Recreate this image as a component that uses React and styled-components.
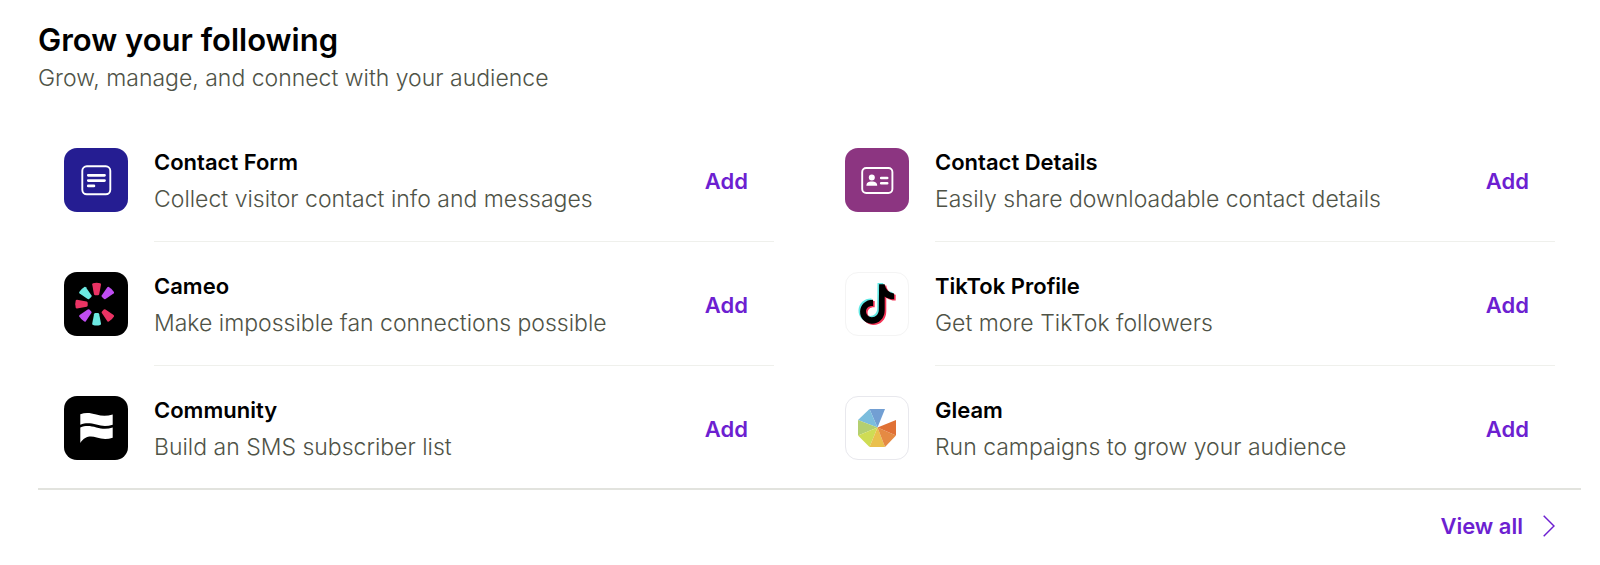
import React from "react";
import styled, { createGlobalStyle } from "styled-components";

const GlobalStyle = createGlobalStyle`
  *, *::before, *::after { box-sizing: border-box; }
  body {
    margin: 0;
    background: #fff;
    color: #000;
    font-family: Inter, "Liberation Sans", sans-serif;
  }
`;

const Section = styled.section`
  padding: 20px 19px 12px 38px;
`;

const Heading = styled.h2`
  margin: 0;
  font-size: 31px;
  line-height: 40px;
  font-weight: 600;
`;

const Subtitle = styled.p`
  margin: 0;
  font-size: 23px;
  line-height: 36px;
  font-weight: 300;
  color: #4f5347;
`;

const AppGrid = styled.ul`
  display: grid;
  grid-template-columns: 1fr 1fr;
  column-gap: 71px;
  margin: 0;
  padding: 22px 26px 0;
  list-style: none;
  border-bottom: 2px solid #e2e3de;
`;

const AppItem = styled.li`
  display: flex;
  gap: 26px;
`;

const Tile = styled.div`
  flex: none;
  width: 64px;
  height: 64px;
  margin-top: 30px;
  border-radius: 13px;
  overflow: hidden;
  background: ${(p) => p.$bg};
  border: ${(p) => (p.$outlined ? "1px solid " + p.$outlined : "0")};

  svg {
    display: block;
    width: 64px;
    height: 64px;
    margin: ${(p) => (p.$outlined ? "-1px" : "0")};
  }
`;

const Row = styled.div`
  flex: 1;
  min-width: 0;
  display: flex;
  align-items: center;
  justify-content: space-between;
  padding: 26px 26px ${(p) => (p.$last ? "21px" : "22px")} 0;
  border-bottom: ${(p) => (p.$last ? "0" : "1px solid #eff0ec")};
`;

const AppName = styled.h3`
  margin: 0;
  font-size: 22px;
  line-height: 36px;
  font-weight: 600;
`;

const AppText = styled.p`
  margin: 0;
  font-size: 23px;
  line-height: 39px;
  font-weight: 300;
  color: #4f5347;
`;

const AddButton = styled.button`
  padding: 0 0 2px;
  border: 0;
  background: none;
  color: #6d1fd1;
  font: 600 22px/36px Inter, "Liberation Sans", sans-serif;
  cursor: pointer;
`;

const Footer = styled.footer`
  display: flex;
  justify-content: flex-end;
  padding: 18px 26px 0;
`;

const ViewAll = styled.a`
  display: flex;
  align-items: center;
  gap: 20px;
  color: #6d1fd1;
  font-size: 22px;
  line-height: 36px;
  font-weight: 600;
  text-decoration: none;

  svg { display: block; }
`;

const FormIcon = () => (
  <svg viewBox="0 0 64 64" fill="none" stroke="#fff" strokeLinecap="round" aria-hidden="true">
    <rect x="18.3" y="18.3" width="28" height="28" rx="4.5" strokeWidth="1.9" />
    <path d="M24.3 27.3h16.2M24.3 32.6h16.2M24.3 37.9h5.6" strokeWidth="2.8" />
  </svg>
);

const DetailsIcon = () => (
  <svg viewBox="0 0 64 64" fill="none" stroke="#fff" strokeLinecap="round" aria-hidden="true">
    <rect x="17.2" y="20" width="30.2" height="25" rx="4" strokeWidth="1.9" />
    <circle cx="26.8" cy="29.6" r="3" fill="#fff" stroke="none" />
    <path d="M21.4 37.7c0-3.2 2-4.3 5.4-4.3s5.4 1.1 5.4 4.3z" fill="#fff" stroke="none" />
    <path d="M36.2 30h6M36.2 35.3h6" strokeWidth="2.6" />
  </svg>
);

const CAMEO_BLADES = [
  [0, "#ea3364"],
  [45, "#bf4df2"],
  [135, "#ea3364"],
  [180, "#6ce9e2"],
  [225, "#bf4df2"],
  [270, "#ea3364"],
  [315, "#6ce9e2"],
];

const CameoIcon = () => (
  <svg viewBox="0 0 64 64" aria-hidden="true">
    {CAMEO_BLADES.map(([angle, color]) => (
      <path
        key={angle}
        d="M-3.6-20.9Q0-21.9 3.6-20.9Q4.5-20.6 4.4-19.6L2.6-10Q2.3-8.9 1.3-8.9H-1.3Q-2.3-8.9-2.6-10L-4.4-19.6Q-4.5-20.6-3.6-20.9z"
        fill={color}
        transform={`translate(32.6 32.2) rotate(${angle})`}
      />
    ))}
  </svg>
);

const CommunityIcon = () => (
  <svg viewBox="0 0 64 64" fill="#fff" aria-hidden="true">
    <path d="M16.3 18.3c5.2-2 10.2-1.4 16 .3 5.8 1.7 10.7 1.7 16.4-.1v10.2c-5.7 1.7-10.6 1.5-16.4-.1-5.8-1.7-10.8-2-16 .1z" />
    <path d="M16.3 31.4c5.2-2.1 10.2-1.7 16 0 5.8 1.7 10.7 1.9 16.4.2v10.1c-5.5 1.7-10.5 1.5-16-.2-5.9-1.8-11.8-1.8-16.4 5.5z" />
  </svg>
);

const NOTE =
  "M34.1 12h5.6c.5 4.6 4.2 8.7 9.4 9.1v5.9c-3.5.2-6.8-1-9.4-2.9v13.8c0 8.5-6.4 13.9-13.4 13.5C19.6 51 14.8 45.6 15.1 39c.3-6.9 6-11.9 13-11.6v6.3c-3.9-.5-7 1.8-7.1 5.3-.1 3.3 2.5 5.9 5.8 5.9 4 0 6.7-2.5 7-7.1z";

const TikTokIcon = () => (
  <svg viewBox="0 0 64 64" aria-hidden="true">
    <path d={NOTE} fill="#62e8e4" transform="translate(-1.6 -1)" />
    <path d={NOTE} fill="#f43658" transform="translate(1.6 1.6)" />
    <path d={NOTE} fill="#000" transform="translate(0 .3)" />
  </svg>
);

const GLEAM_SLICES = [
  ["24.5,13 40,13 32.5,31.5", "#729fd3"],
  ["13,24 24.5,13 32.5,31.5", "#7bbddd"],
  ["13,39.5 13,24 32.5,31.5", "#b4cf70"],
  ["24.5,51 13,39.5 32.5,31.5", "#cfdc54"],
  ["40,51 24.5,51 32.5,31.5", "#eac04d"],
  ["51,39.5 40,51 32.5,31.5", "#e58a43"],
  ["51,24 51,39.5 32.5,31.5", "#e07135"],
];

const GleamIcon = () => (
  <svg viewBox="0 0 64 64" aria-hidden="true">
    {GLEAM_SLICES.map(([points, color]) => (
      <polygon key={color} points={points} fill={color} />
    ))}
  </svg>
);

const APPS = [
  { name: "Contact Form", text: "Collect visitor contact info and messages", bg: "#251d92", Icon: FormIcon },
  { name: "Contact Details", text: "Easily share downloadable contact details", bg: "#8c3581", Icon: DetailsIcon },
  { name: "Cameo", text: "Make impossible fan connections possible", bg: "#000", Icon: CameoIcon },
  { name: "TikTok Profile", text: "Get more TikTok followers", bg: "#fff", outlined: "#f4f4f4", Icon: TikTokIcon },
  { name: "Community", text: "Build an SMS subscriber list", bg: "#000", Icon: CommunityIcon },
  { name: "Gleam", text: "Run campaigns to grow your audience", bg: "#fff", outlined: "#e8e8ed", Icon: GleamIcon },
];

export default function App() {
  return (
    <>
      <GlobalStyle />
      <Section>
        <Heading>Grow your following</Heading>
        <Subtitle>Grow, manage, and connect with your audience</Subtitle>
        <AppGrid>
          {APPS.map(({ name, text, bg, outlined, Icon }, i) => (
            <AppItem key={name}>
              <Tile $bg={bg} $outlined={outlined}>
                <Icon />
              </Tile>
              <Row $last={i >= APPS.length - 2}>
                <div>
                  <AppName>{name}</AppName>
                  <AppText>{text}</AppText>
                </div>
                <AddButton type="button" aria-label={`Add ${name}`}>Add</AddButton>
              </Row>
            </AppItem>
          ))}
        </AppGrid>
        <Footer>
          <ViewAll href="#all">
            View all
            <svg width="12" height="22" viewBox="0 0 12 22" fill="none" stroke="#6d1fd1" strokeWidth="1.5" aria-hidden="true">
              <path d="M.7.8 11 11 .7 21.2" />
            </svg>
          </ViewAll>
        </Footer>
      </Section>
    </>
  );
}
